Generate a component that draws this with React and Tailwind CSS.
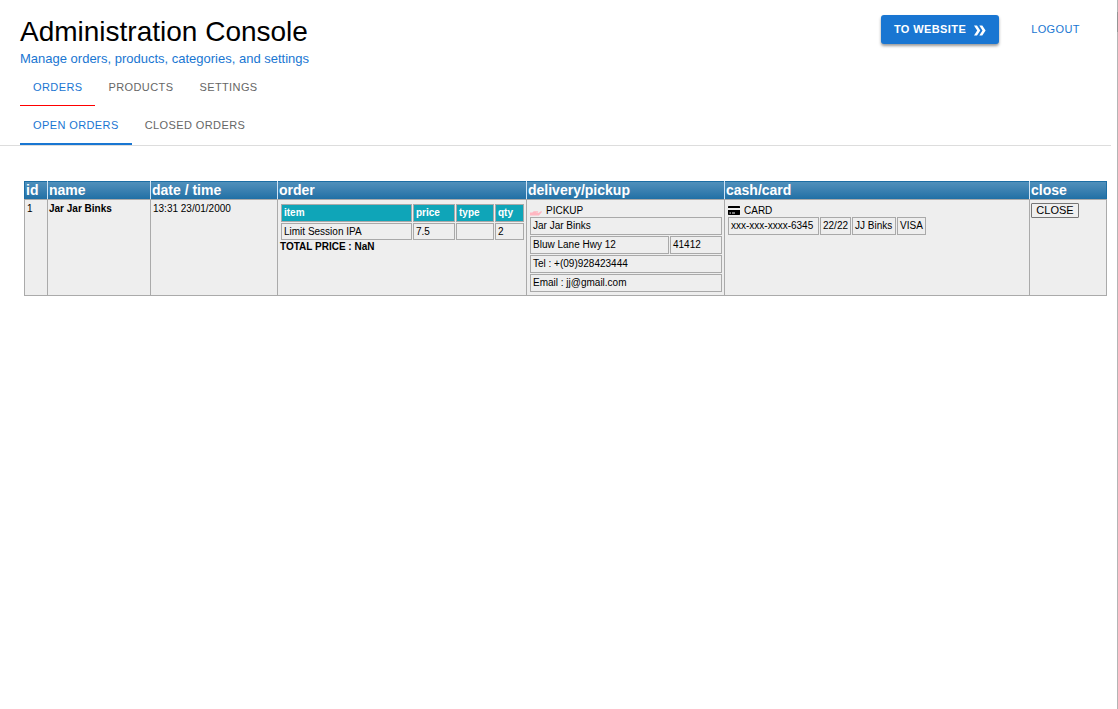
import React from "react";

const headers = ["id", "name", "date / time", "order", "delivery/pickup", "cash/card", "close"];
const items = [{ item: "Limit Session IPA", price: "7.5", type: "", qty: "2" }];

function Tab({ children, selected, className = "" }) {
  return (
    <button
      type="button"
      role="tab"
      aria-selected={!!selected}
      className={`px-[13px] text-[11px] leading-5 tracking-[0.4px] uppercase ${selected ? "text-[#1976d2]" : "text-[#666666]"} ${className}`}
    >
      {children}
    </button>
  );
}

function Box({ children, className = "" }) {
  return <div className={`h-[18px] border border-[#a9a9a9] px-0.5 leading-4 whitespace-nowrap ${className}`}>{children}</div>;
}

function Header() {
  return (
    <header className="flex items-start justify-between pt-[14px] pr-[25px] pl-5">
      <div>
        <h1 className="text-[28px] leading-9 text-black">Administration Console</h1>
        <p className="text-[13px] leading-[18px] text-[#1976d2]">Manage orders, products, categories, and settings</p>
      </div>
      <div className="flex gap-5">
        <a
          href="#website"
          className="mt-px flex h-[29px] items-center rounded-[3px] bg-[#1976d2] px-[13px] text-[11px] font-bold tracking-[0.4px] text-white shadow-[0_2px_3px_rgba(0,0,0,0.4)]"
        >
          TO WEBSITE
          <svg className="ml-2 h-3 w-3" viewBox="0 0 12 12" fill="currentColor" aria-hidden="true">
            <path d="M0 1.500h3L6.300 6.500 3 11.500H0L3.200 6.500zM5.300 1.500h3L11.600 6.500l-3.300 5h-3l3.200-5z" />
          </svg>
        </a>
        <button type="button" className="mt-px h-[29px] px-3 text-[11px] tracking-[0.4px] text-[#1976d2]">
          LOGOUT
        </button>
      </div>
    </header>
  );
}

function OrderItems() {
  return (
    <>
      <table className="w-full table-fixed border-separate border-spacing-px">
        <colgroup>
          <col />
          <col className="w-[42px]" />
          <col className="w-[38px]" />
          <col className="w-[29px]" />
        </colgroup>
        <thead>
          <tr>
            {["item", "price", "type", "qty"].map((h) => (
              <th key={h} scope="col" className="h-[18px] border border-[#a9a9a9] bg-[#0fa5b8] px-0.5 py-0 text-left leading-4 font-bold text-white">
                {h}
              </th>
            ))}
          </tr>
        </thead>
        <tbody>
          {items.map((row) => (
            <tr key={row.item}>
              {[row.item, row.price, row.type, row.qty].map((value, i) => (
                <td key={i} className="h-[17px] border border-[#a9a9a9] px-0.5 py-0 leading-[15px]">
                  {value}
                </td>
              ))}
            </tr>
          ))}
        </tbody>
      </table>
      <p className="leading-3 font-bold">TOTAL PRICE : NaN</p>
    </>
  );
}

function Delivery() {
  return (
    <div className="pt-1 pl-px">
      <div className="flex h-[13px] items-center gap-1">
        <svg className="h-3 w-3" viewBox="0 0 12 12" fill="#ffb6c1" aria-hidden="true">
          <path d="M0 7.500h2.300L3.800 6.300h3.700c1 0 1 1.400 0 1.400H6v.4h2.500L10.800 6.300c.9-.5 1.600.3.9 1L8.900 10.500H0z" />
        </svg>
        <span>PICKUP</span>
      </div>
      <div className="flex flex-col gap-px">
        <Box>Jar Jar Binks</Box>
        <div className="flex gap-px">
          <Box className="flex-1">Bluw Lane Hwy 12</Box>
          <Box className="w-[52px]">41412</Box>
        </div>
        <Box>Tel : +(09)928423444</Box>
        <Box>Email : jj@gmail.com</Box>
      </div>
    </div>
  );
}

function Payment() {
  return (
    <div className="pt-1 pl-px">
      <div className="flex h-[13px] items-center gap-1">
        <svg className="h-3 w-3" viewBox="0 0 12 12" aria-hidden="true">
          <path d="M.5 1h11l.5.500V3H0V1.500zM0 5h12v4.500l-.5.500H.5L0 9.500z" />
          <path d="M1.500 8h1.500M4 8h3" stroke="#eeeeee" />
        </svg>
        <span>CARD</span>
      </div>
      <div className="flex gap-px">
        <Box className="min-w-[91px]">xxx-xxx-xxxx-6345</Box>
        <Box className="min-w-[31px]">22/22</Box>
        <Box className="min-w-[44px]">JJ Binks</Box>
        <Box className="min-w-[29px]">VISA</Box>
      </div>
    </div>
  );
}

export default function App() {
  return (
    <div className="relative min-h-screen border-r border-[#b4b4b4] bg-white font-['Liberation_Sans',Arial,sans-serif] text-black">
      <div className="absolute top-3 -right-px h-5 w-px bg-[#949494]" aria-hidden="true" />
      <Header />
      <div className="mr-[6px] border-b border-[#dddddd]">
        <div role="tablist" aria-label="Sections" className="flex h-[38px] pl-5">
          <Tab selected className="border-b border-[#ff0000]">Orders</Tab>
          <Tab className="border-b border-transparent">Products</Tab>
          <Tab className="border-b border-transparent">Settings</Tab>
        </div>
        <div role="tablist" aria-label="Orders" className="flex h-[39px] pl-5">
          <Tab selected className="border-b-2 border-[#1976d2]">Open Orders</Tab>
          <Tab className="border-b-2 border-transparent">Closed Orders</Tab>
        </div>
      </div>
      <main className="pt-[35px] pr-[10px] pl-6">
        <table className="w-full table-fixed border-collapse text-[10px]">
          <colgroup>
            <col className="w-[23px]" />
            <col className="w-[103px]" />
            <col className="w-[127px]" />
            <col className="w-[249px]" />
            <col className="w-[198px]" />
            <col />
            <col className="w-[77px]" />
          </colgroup>
          <thead>
            <tr className="bg-linear-to-b from-[#5090bb] to-[#1c6ea4]">
              {headers.map((h) => (
                <th
                  key={h}
                  scope="col"
                  className="h-[18px] border border-t-[#1c6ea4] border-r-[#d0e4f5] border-b-[#aaaaaa] border-l-[#d0e4f5] px-px py-0 text-left text-[14px] leading-[17px] font-bold text-white first:border-l-[#1c6ea4] last:border-r-[#1c6ea4]"
                >
                  {h}
                </th>
              ))}
            </tr>
          </thead>
          <tbody>
            <tr className="h-24 bg-[#eeeeee] align-top">
              <td className="border border-[#aaaaaa] px-0.5 py-[3px] leading-3">1</td>
              <td className="border border-[#aaaaaa] px-px py-[3px] leading-3 font-bold">Jar Jar Binks</td>
              <td className="border border-[#aaaaaa] px-0.5 py-[3px] leading-3">13:31 23/01/2000</td>
              <td className="border border-[#aaaaaa] py-[3px] pr-px pl-0.5"><OrderItems /></td>
              <td className="border border-[#aaaaaa] px-0.5 py-0"><Delivery /></td>
              <td className="border border-[#aaaaaa] px-0.5 py-0"><Payment /></td>
              <td className="border border-[#aaaaaa] px-px py-[3px]">
                <button type="button" className="block h-[15px] w-12 rounded-[1px] border border-[#767676] bg-[#efefef] text-[11px] leading-[13px]">
                  CLOSE
                </button>
              </td>
            </tr>
          </tbody>
        </table>
      </main>
    </div>
  );
}
